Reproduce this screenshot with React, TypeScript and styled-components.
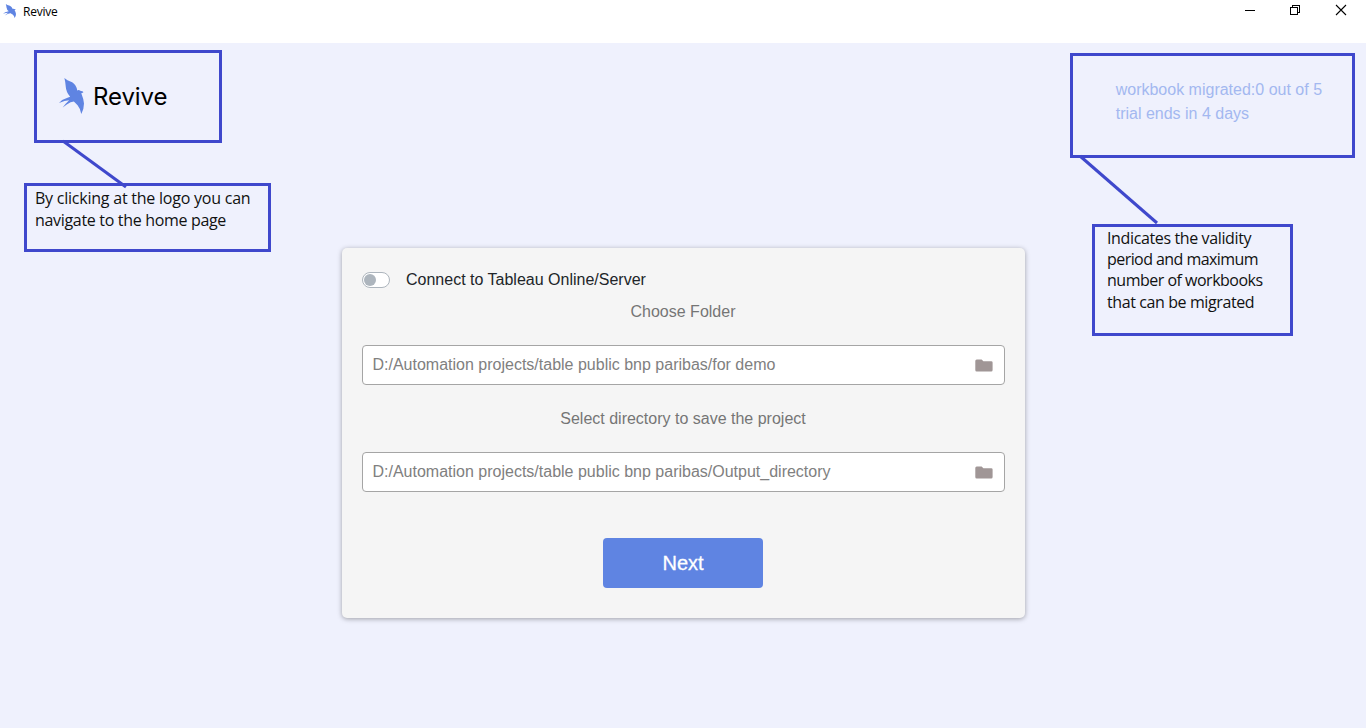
import React from "react";
import styled, { createGlobalStyle } from "styled-components";

const BLUE = "#5f84e2";
const INK = "#3f48cc";

const GlobalStyle = createGlobalStyle`
  * { box-sizing: border-box; }
  body { margin: 0; background: #eff1fd; overflow: hidden; font-family: "Liberation Sans", Arial, sans-serif; }
`;

const Window = styled.div`
  display: flex;
  flex-direction: column;
  width: 1366px;
  height: 728px;
  background: #eff1fd;
`;

const TitleBar = styled.header`
  display: flex;
  justify-content: space-between;
  height: 43px;
  background: #fff;
`;

const TitleBrand = styled.div`
  display: flex;
  gap: 7px;
  height: 24px;
  padding: 4px 0 0 3px;
`;

const TitleText = styled.span`
  font: 12px/16px "Open Sans", sans-serif;
  letter-spacing: -0.25px;
  color: #000;
`;

const WindowControls = styled.div`
  display: flex;
  gap: 34px;
  padding: 4px 19px 0 0;
  height: 18px;
`;

const Main = styled.main`
  display: flex;
  flex: 1;
`;

const SideColumn = styled.aside<{ $width: number; $pad: string }>`
  position: relative;
  display: flex;
  flex-direction: column;
  width: ${(p) => p.$width}px;
  padding: ${(p) => p.$pad};
`;

const Frame = styled.div<{ $width: number; $height: number }>`
  display: flex;
  width: ${(p) => p.$width}px;
  height: ${(p) => p.$height}px;
  border: 3px solid ${INK};
`;

const LogoFrame = styled(Frame)`
  margin-left: 10px;
  padding: 25px 0 0 22px;
  gap: 9px;
`;

const LogoText = styled.span`
  padding-top: 1px;
  font: 400 24px/36px Inter, sans-serif;
  letter-spacing: -0.1px;
  color: #000;
`;

const TrialFrame = styled(Frame)`
  flex-direction: column;
  padding: 22px 0 0 42.7px;
  font-size: 16px;
  line-height: 24px;
  color: #a3b8f0;
  white-space: nowrap;
`;

const Note = styled(Frame)<{ $top: number; $left: number; $indent: number; $line: number; $pull: number }>`
  flex-direction: column;
  margin: ${(p) => p.$top}px 0 0 ${(p) => p.$left}px;
  padding-left: ${(p) => p.$indent}px;
  font: 16px/${(p) => p.$line}px "Open Sans", sans-serif;
  color: #111;
  white-space: nowrap;

  span:first-child { margin-top: ${(p) => p.$pull}px; }
`;

const NoteLine = styled.span<{ $track: number }>`
  letter-spacing: ${(p) => p.$track}px;
`;

const Connector = styled.svg<{ $x: number; $y: number }>`
  position: absolute;
  left: ${(p) => p.$x}px;
  top: ${(p) => p.$y}px;
`;

const Card = styled.section`
  display: flex;
  flex-direction: column;
  align-items: center;
  width: 683px;
  height: 370px;
  margin-top: 205px;
  padding: 20px 20px 30px;
  border-radius: 5px;
  background: #f5f5f5;
  box-shadow: 0 1px 5px rgba(0, 0, 0, 0.34);
`;

const SwitchRow = styled.label`
  display: flex;
  align-items: center;
  align-self: stretch;
  gap: 16px;
  height: 24px;
  font-size: 16px;
  color: #212529;
`;

const Track = styled.span`
  display: flex;
  align-items: center;
  width: 28px;
  height: 16px;
  padding-left: 1px;
  border: 1px solid #adb5bd;
  border-radius: 8px;
  background: #fff;
`;

const Knob = styled.span`
  width: 12px;
  height: 12px;
  border-radius: 50%;
  background: #adb5bd;
`;

const FieldLabel = styled.div<{ $top: number }>`
  margin-top: ${(p) => p.$top}px;
  padding-right: 1px;
  font-size: 16px;
  line-height: 24px;
  color: #757575;
`;

const PathField = styled.div`
  display: flex;
  align-items: center;
  justify-content: space-between;
  align-self: stretch;
  height: 40px;
  margin-top: 21px;
  padding: 0 11px 0 9.5px;
  border: 1px solid #a5a5a5;
  border-radius: 4px;
  background: #fff;
  font-size: 16px;
  color: #808080;
`;

const NextButton = styled.button`
  width: 160px;
  height: 50px;
  margin: 46px 1px 0 0;
  padding: 0;
  border: 0;
  border-radius: 4px;
  background: ${BLUE};
  color: #fff;
  font: 20px/50px "Liberation Sans", Arial, sans-serif;
  -webkit-text-stroke: 0.3px #fff;
`;

const Swallow = ({ width, height }: { width: number; height: number }) => (
  <svg width={width} height={height} viewBox="3 8 74 107" preserveAspectRatio="none" fill={BLUE}>
    <path d="M19 8 L28 15 L42 21 Q54 28 57 45 Q62 42 66 46 L74 48 L75 51 L69 53 Q76 70 77 84 Q77 101 69 115 Q67 100 58 89 Q52 83 47 78 Q38 78 26 87 L14 96 Q22 84 33 74 Q20 74 3 82 Q15 70 30 66 L36 64 Q24 50 23 34 Q22 20 19 8Z" />
  </svg>
);

const Folder = () => (
  <svg width="18" height="13" viewBox="0 0 18 13" fill="#a09696">
    <path d="M1.7 0.5H6.6L8.4 2.2H16.2Q17.6 2.2 17.6 3.6V11Q17.6 12.5 16.2 12.5H1.7Q.3 12.5 .3 11V2Q.3.5 1.7.5Z" />
  </svg>
);

export default function App() {
  return (
    <Window>
      <GlobalStyle />
      <TitleBar>
        <TitleBrand>
          <Swallow width={13} height={14} />
          <TitleText>Revive</TitleText>
        </TitleBrand>
        <WindowControls>
          <svg width="12" height="12" shapeRendering="crispEdges">
            <path d="M2 6.5H12" stroke="#000" />
          </svg>
          <svg width="12" height="12" fill="none" stroke="#000" shapeRendering="crispEdges">
            <path d="M1.5 3.5H8.5V10.5H1.5ZM3.5 3.5V1.5H10.5V8.5H8.5" />
          </svg>
          <svg width="12" height="12" stroke="#000" strokeWidth="1.1">
            <path d="M1 1L11 11M11 1L1 11" />
          </svg>
        </WindowControls>
      </TitleBar>
      <Main>
        <SideColumn $width={342} $pad="7px 0 0 24px">
          <LogoFrame $width={188} $height={93}>
            <Swallow width={25} height={36} />
            <LogoText>Revive</LogoText>
          </LogoFrame>
          <Note $width={247} $height={69} $top={40} $left={0} $indent={8} $line={22} $pull={1}>
            <NoteLine $track={-0.23}>By clicking at the logo you can</NoteLine>
            <NoteLine $track={-0.32}>navigate to the home page</NoteLine>
          </Note>
          <Connector $x={60} $y={96} width="70" height="50" stroke={INK} strokeWidth="3">
            <path d="M3 2L66 48" />
          </Connector>
        </SideColumn>
        <Card>
          <SwitchRow>
            <Track><Knob /></Track>
            Connect to Tableau Online/Server
          </SwitchRow>
          <FieldLabel $top={8}>Choose Folder</FieldLabel>
          <PathField>
            D:/Automation projects/table public bnp paribas/for demo
            <Folder />
          </PathField>
          <FieldLabel $top={22}>Select directory to save the project</FieldLabel>
          <PathField>
            D:/Automation projects/table public bnp paribas/Output_directory
            <Folder />
          </PathField>
          <NextButton>Next</NextButton>
        </Card>
        <SideColumn $width={341} $pad="10px 0 0 45px">
          <TrialFrame $width={285} $height={105}>
            <span>workbook migrated:0 out of 5</span>
            <span>trial ends in 4 days</span>
          </TrialFrame>
          <Note $width={201} $height={112} $top={66} $left={22} $indent={12} $line={21.2} $pull={0.9}>
            <NoteLine $track={-0.37}>Indicates the validity</NoteLine>
            <NoteLine $track={-0.56}>period and maximum</NoteLine>
            <NoteLine $track={-0.5}>number of workbooks</NoteLine>
            <NoteLine $track={-0.4}>that can be migrated</NoteLine>
          </Note>
          <Connector $x={50} $y={110} width="90" height="75" stroke={INK} strokeWidth="3">
            <path d="M5 3L82 70" />
          </Connector>
        </SideColumn>
      </Main>
    </Window>
  );
}
